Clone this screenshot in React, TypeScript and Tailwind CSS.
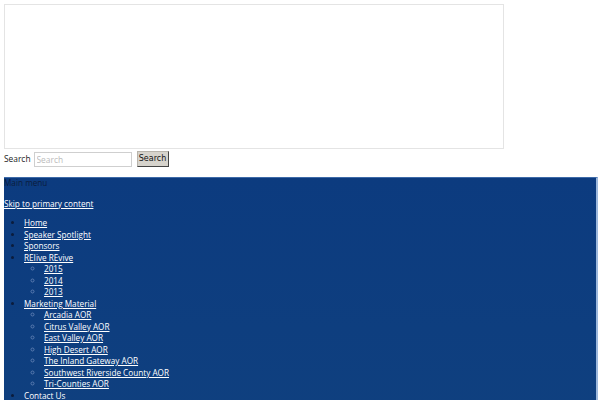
const relive = ["2015", "2014", "2013"];
const marketing = [
  "Arcadia AOR",
  "Citrus Valley AOR",
  "East Valley AOR",
  "High Desert AOR",
  "The Inland Gateway AOR",
  "Southwest Riverside County AOR",
  "Tri-Counties AOR",
];

function NavLink({ label }: { label: string }) {
  return (
    <a href="#" className="text-white underline">
      {label}
    </a>
  );
}

export default function App() {
  return (
    <div className="h-[400px] overflow-hidden bg-white p-1 font-['Open_Sans',sans-serif] text-[8.2px] leading-[11.5px] text-[#222]">
      <div className="h-[145px] w-[500px] border border-[#e4e4e4] bg-white" />

      <form className="mt-[2px] flex items-center" onSubmit={(e) => e.preventDefault()}>
        <label className="text-[8.4px] text-[#222]">Search</label>
        <input
          type="text"
          placeholder="Search"
          className="ml-[3px] h-[15px] w-[98px] border border-[#cfcfcf] px-[2px] text-[8.4px] placeholder:text-[#bbb] outline-none"
        />
        <button
          type="button"
          className="ml-[5px] h-[16px] w-[32px] border border-[#b8b4ac] border-r-[#444] border-b-[#444] bg-[#d6d3cc] font-['DejaVu_Sans',sans-serif] text-[8px] leading-none text-[#111]"
        >
          Search
        </button>
      </form>

      <nav className="mt-[10px] h-[300px] w-[594px] border-t border-r-2 border-t-[#3d6aa8] border-r-[#9db8dc] bg-gradient-to-b from-[#0c3b7f] to-[#10417f]">
        <h3 className="-mt-px text-[#0b1c3c]">Main menu</h3>
        <a href="#" className="mt-[9px] block text-white underline">
          Skip to primary content
        </a>
        <ul className="mt-[8px] list-disc pl-[20px] text-[#0b1c3c] marker:text-[#0b1c3c]">
          <li>
            <NavLink label="Home" />
          </li>
          <li>
            <NavLink label="Speaker Spotlight" />
          </li>
          <li>
            <NavLink label="Sponsors" />
          </li>
          <li>
            <NavLink label="REIive REvive" />
            <ul className="list-[circle] pl-[20px] marker:text-[#5a7bb0]">
              {relive.map((y) => (
                <li key={y}>
                  <NavLink label={y} />
                </li>
              ))}
            </ul>
          </li>
          <li>
            <NavLink label="Marketing Material" />
            <ul className="list-[circle] pl-[20px] marker:text-[#5a7bb0]">
              {marketing.map((m) => (
                <li key={m}>
                  <NavLink label={m} />
                </li>
              ))}
            </ul>
          </li>
          <li>
            <NavLink label="Contact Us" />
          </li>
        </ul>
      </nav>
    </div>
  );
}
